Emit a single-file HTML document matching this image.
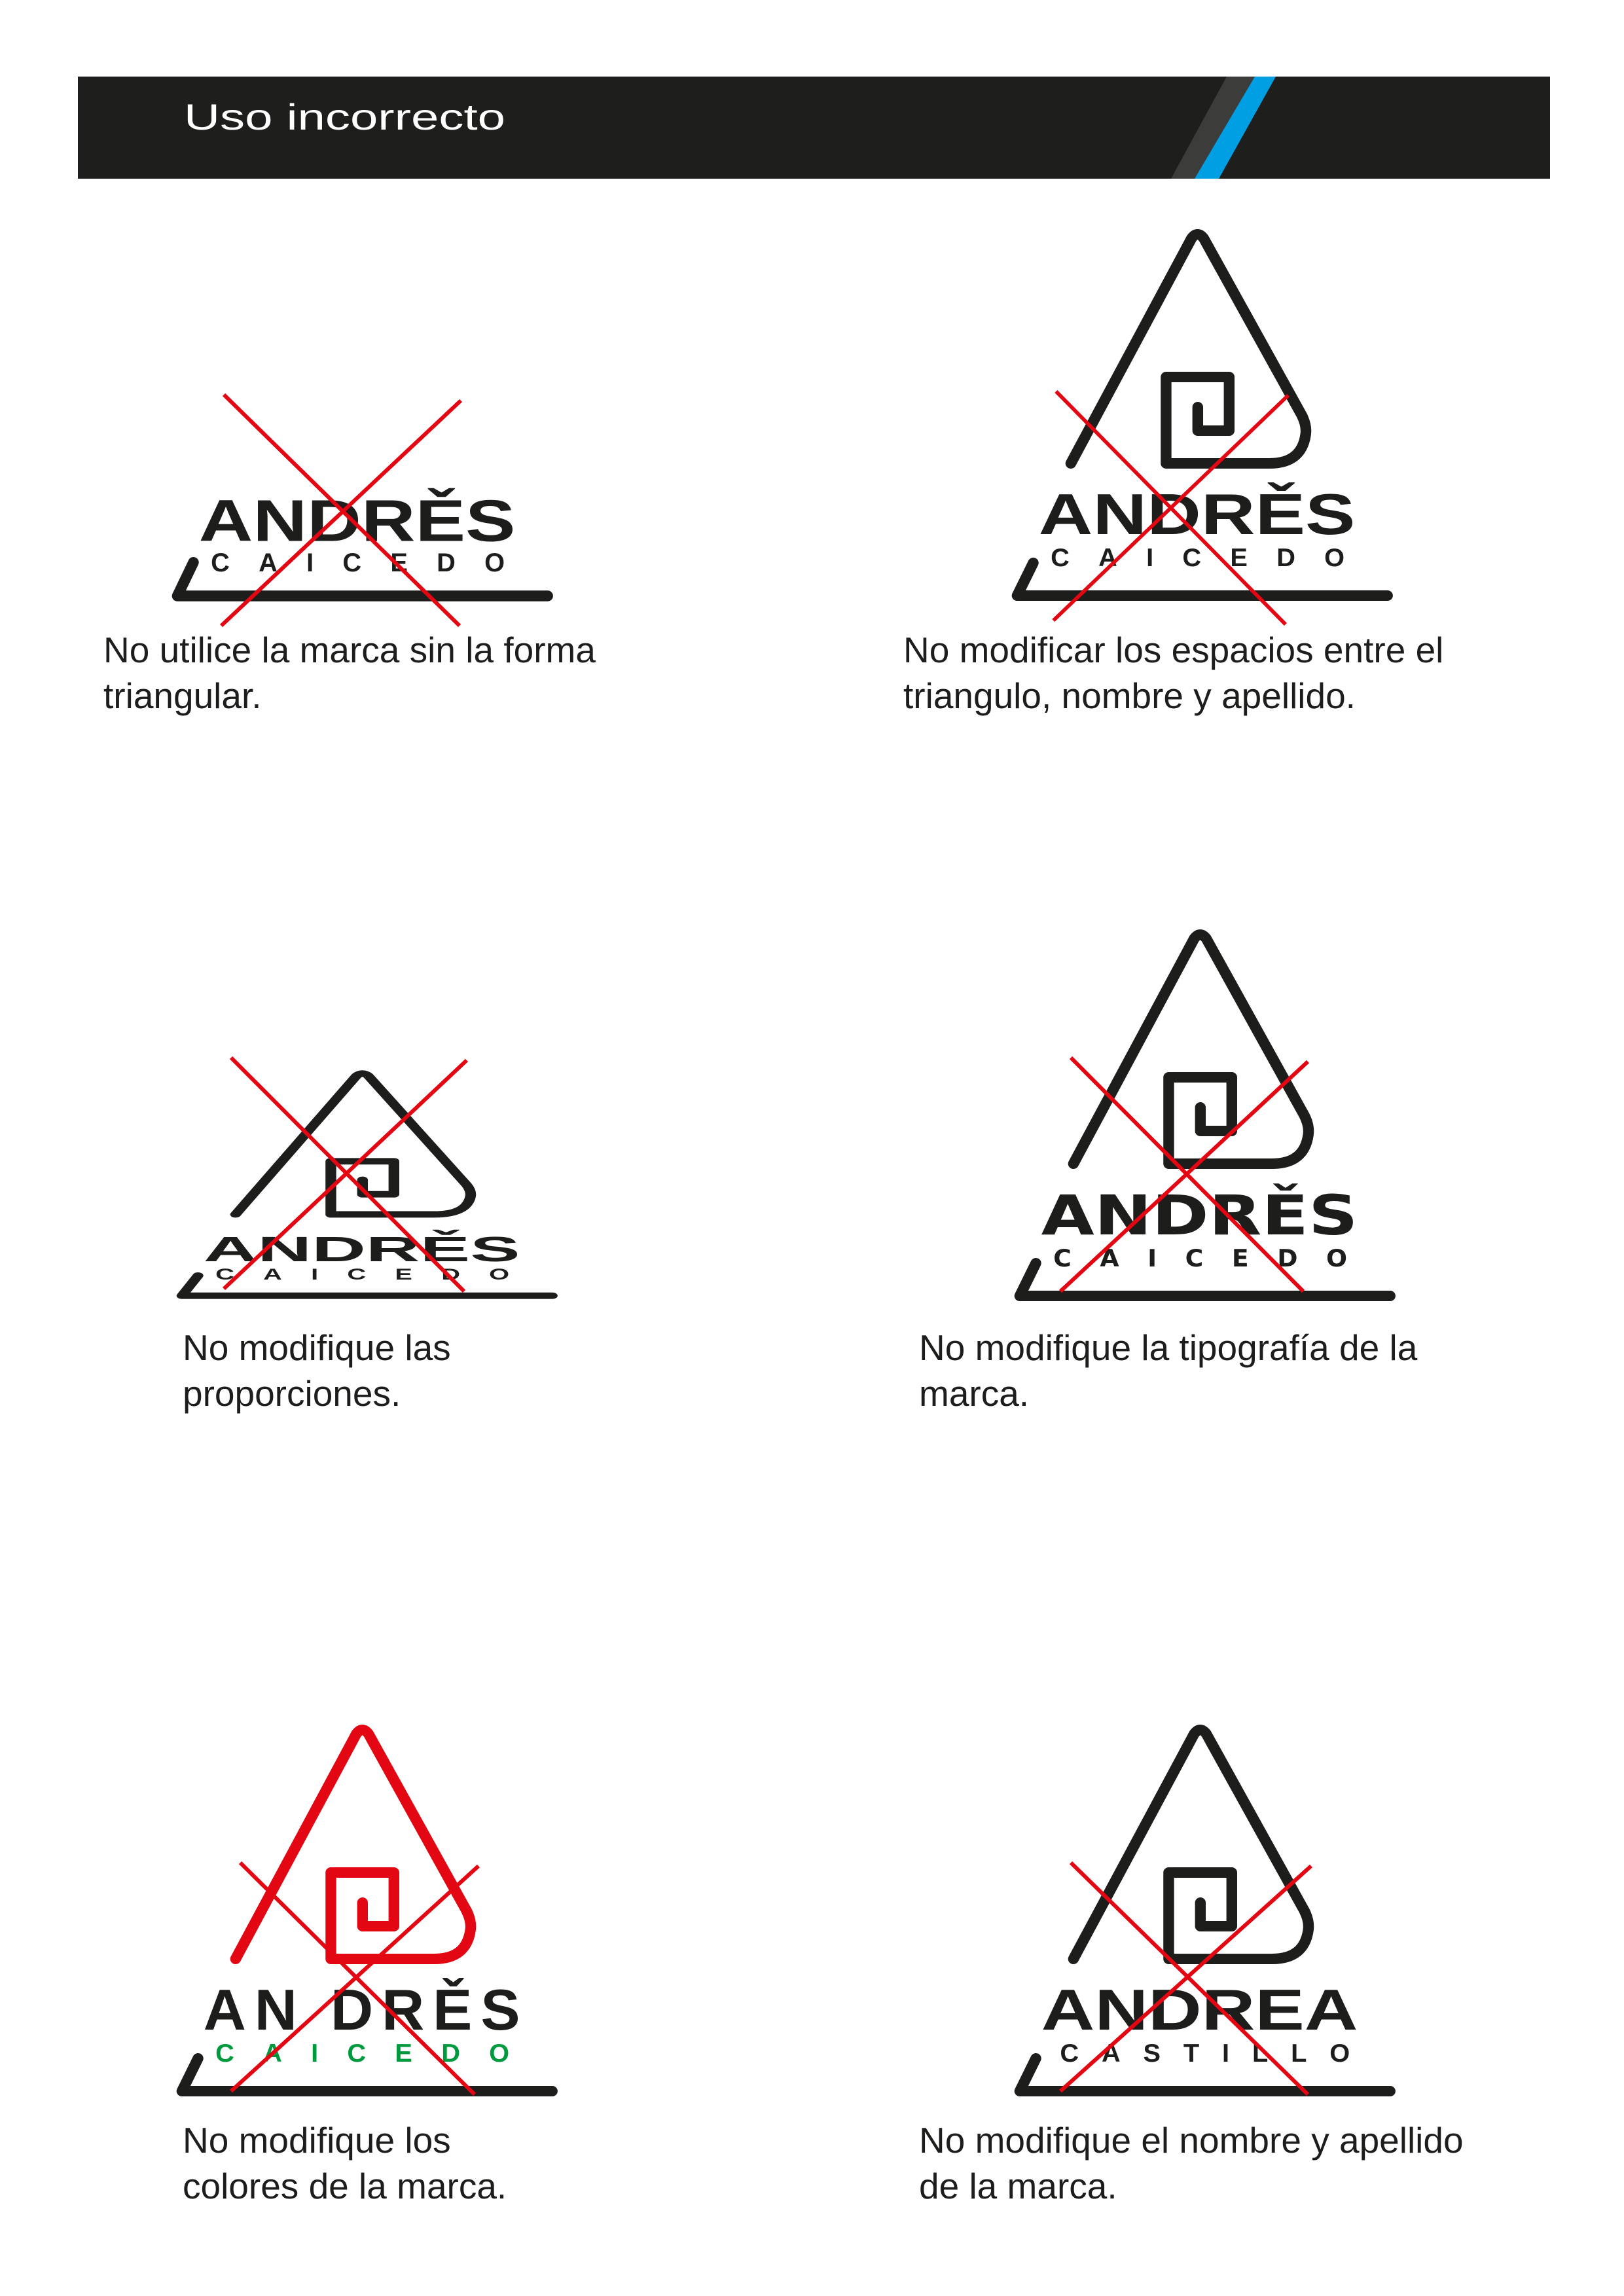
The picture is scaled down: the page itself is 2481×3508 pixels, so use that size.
<!DOCTYPE html>
<html><head><meta charset="utf-8"><style>
html,body{margin:0;padding:0;background:#fff;}
svg{display:block;}
.cap{font-family:"Liberation Sans",sans-serif;font-size:55px;fill:#1d1d1b;}
</style></head><body>
<svg width="2481" height="3508" viewBox="0 0 2481 3508" xmlns="http://www.w3.org/2000/svg">
<defs>
<path id="tri" d="M290,945 L740,85 Q762,55 785,85 L1150,760 Q1170,800 1165,835 Q1150,945 1030,945 L645,945 L645,615 L880,615 L880,820 L763,820 L763,730" fill="none" stroke-width="40" stroke-linecap="round" stroke-linejoin="round"/>
<path id="base" d="M150,1325 L90,1450 L1470,1450" fill="none" stroke="#1d1d1b" stroke-width="40" stroke-linecap="round" stroke-linejoin="round"/>
</defs>

<!-- header -->
<rect x="119" y="117" width="2249" height="156" fill="#1e1e1c"/>
<polygon points="1874,117 1917,117 1825,273 1789,273" fill="#3c3c3b"/>
<polygon points="1917,117 1949,117 1862,273 1825,273" fill="#009fe3"/>
<text x="281" y="198" font-family="Liberation Sans, sans-serif" font-size="56" fill="#fff" textLength="491" lengthAdjust="spacingAndGlyphs">Uso incorrecto</text>

<!-- logo 1 -->
<g transform="translate(234,316) scale(0.41)">
<text x="170" y="1245" font-family="Liberation Sans, sans-serif" font-weight="bold" font-size="220" fill="#1d1d1b" textLength="1180" lengthAdjust="spacingAndGlyphs">ANDRĚS</text>
<text x="215" y="1358" font-family="Liberation Sans, sans-serif" font-weight="bold" font-size="97" fill="#1d1d1b" textLength="1095" lengthAdjust="spacing">CAICEDO</text>
<use href="#base"/>
</g>
<g stroke="#e30613" stroke-width="6"><line x1="342" y1="603" x2="702" y2="956"/><line x1="704" y1="612" x2="338" y2="956"/></g>

<!-- logo 2 -->
<g transform="translate(1517,330) scale(0.41,0.40)">
<use href="#tri" stroke="#1d1d1b"/>
<text x="170" y="1215" font-family="Liberation Sans, sans-serif" font-weight="bold" font-size="220" fill="#1d1d1b" textLength="1180" lengthAdjust="spacingAndGlyphs">ANDRĚS</text>
<text x="215" y="1338" font-family="Liberation Sans, sans-serif" font-weight="bold" font-size="97" fill="#1d1d1b" textLength="1095" lengthAdjust="spacing">CAICEDO</text>
<use href="#base"/>
<g stroke="#e30613" stroke-width="14"><line x1="235" y1="670" x2="1090" y2="1560"/><line x1="1100" y1="685" x2="225" y2="1545"/></g>
</g>

<!-- logo 3 -->
<g transform="translate(241,1623) scale(0.41,0.246)">
<use href="#tri" stroke="#1d1d1b"/>
<text x="170" y="1235" font-family="Liberation Sans, sans-serif" font-weight="bold" font-size="220" fill="#1d1d1b" textLength="1180" lengthAdjust="spacingAndGlyphs">ANDRĚS</text>
<text x="215" y="1350" font-family="Liberation Sans, sans-serif" font-weight="bold" font-size="97" fill="#1d1d1b" textLength="1095" lengthAdjust="spacing">CAICEDO</text>
<use href="#base"/>
</g>
<g stroke="#e30613" stroke-width="6"><line x1="353" y1="1616" x2="709" y2="1973"/><line x1="713" y1="1620" x2="342" y2="1969"/></g>

<!-- logo 4 -->
<g transform="translate(1521,1400) scale(0.41,0.40)">
<use href="#tri" stroke="#1d1d1b"/>
<text x="170" y="1215" font-family="DejaVu Sans, sans-serif" font-weight="bold" font-size="210" fill="#1d1d1b" textLength="1180" lengthAdjust="spacingAndGlyphs">ANDRĚS</text>
<text x="215" y="1338" font-family="DejaVu Sans, sans-serif" font-weight="bold" font-size="92" fill="#1d1d1b" textLength="1095" lengthAdjust="spacing">CAICEDO</text>
<use href="#base"/>
</g>
<g stroke="#e30613" stroke-width="6"><line x1="1636" y1="1616" x2="1991" y2="1973"/><line x1="1998" y1="1622" x2="1620" y2="1973"/></g>

<!-- logo 5 -->
<g transform="translate(241,2615) scale(0.41,0.40)">
<use href="#tri" stroke="#e30613"/>
<text x="170" y="1215" font-family="Liberation Sans, sans-serif" font-weight="bold" font-size="220" fill="#1d1d1b" textLength="1180" lengthAdjust="spacing">AN DRĚS</text>
<text x="215" y="1338" font-family="Liberation Sans, sans-serif" font-weight="bold" font-size="97" fill="#009a3e" textLength="1095" lengthAdjust="spacing">CAICEDO</text>
<use href="#base"/>
</g>
<g stroke="#e30613" stroke-width="6"><line x1="367" y1="2846" x2="725" y2="3200"/><line x1="731" y1="2851" x2="353" y2="3195"/></g>

<!-- logo 6 -->
<g transform="translate(1521,2615) scale(0.41,0.40)">
<use href="#tri" stroke="#1d1d1b"/>
<text x="170" y="1215" font-family="Liberation Sans, sans-serif" font-weight="bold" font-size="220" fill="#1d1d1b" textLength="1180" lengthAdjust="spacingAndGlyphs">ANDREA</text>
<text x="240" y="1338" font-family="Liberation Sans, sans-serif" font-weight="bold" font-size="97" fill="#1d1d1b" textLength="1080" lengthAdjust="spacing">CASTILLO</text>
<use href="#base"/>
</g>
<g stroke="#e30613" stroke-width="6"><line x1="1636" y1="2846" x2="1998" y2="3200"/><line x1="2003" y1="2851" x2="1620" y2="3195"/></g>

<!-- captions -->
<text class="cap" x="158" y="1012">No utilice la marca sin la forma</text>
<text class="cap" x="158" y="1082">triangular.</text>
<text class="cap" x="1380" y="1012">No modificar los espacios entre el</text>
<text class="cap" x="1380" y="1082">triangulo, nombre y apellido.</text>
<text class="cap" x="279" y="2078">No modifique las</text>
<text class="cap" x="279" y="2148">proporciones.</text>
<text class="cap" x="1404" y="2078">No modifique la tipografía de la</text>
<text class="cap" x="1404" y="2148">marca.</text>
<text class="cap" x="279" y="3289">No modifique los</text>
<text class="cap" x="279" y="3359">colores de la marca.</text>
<text class="cap" x="1404" y="3289">No modifique el nombre y apellido</text>
<text class="cap" x="1404" y="3359">de la marca.</text>
</svg>
</body></html>
